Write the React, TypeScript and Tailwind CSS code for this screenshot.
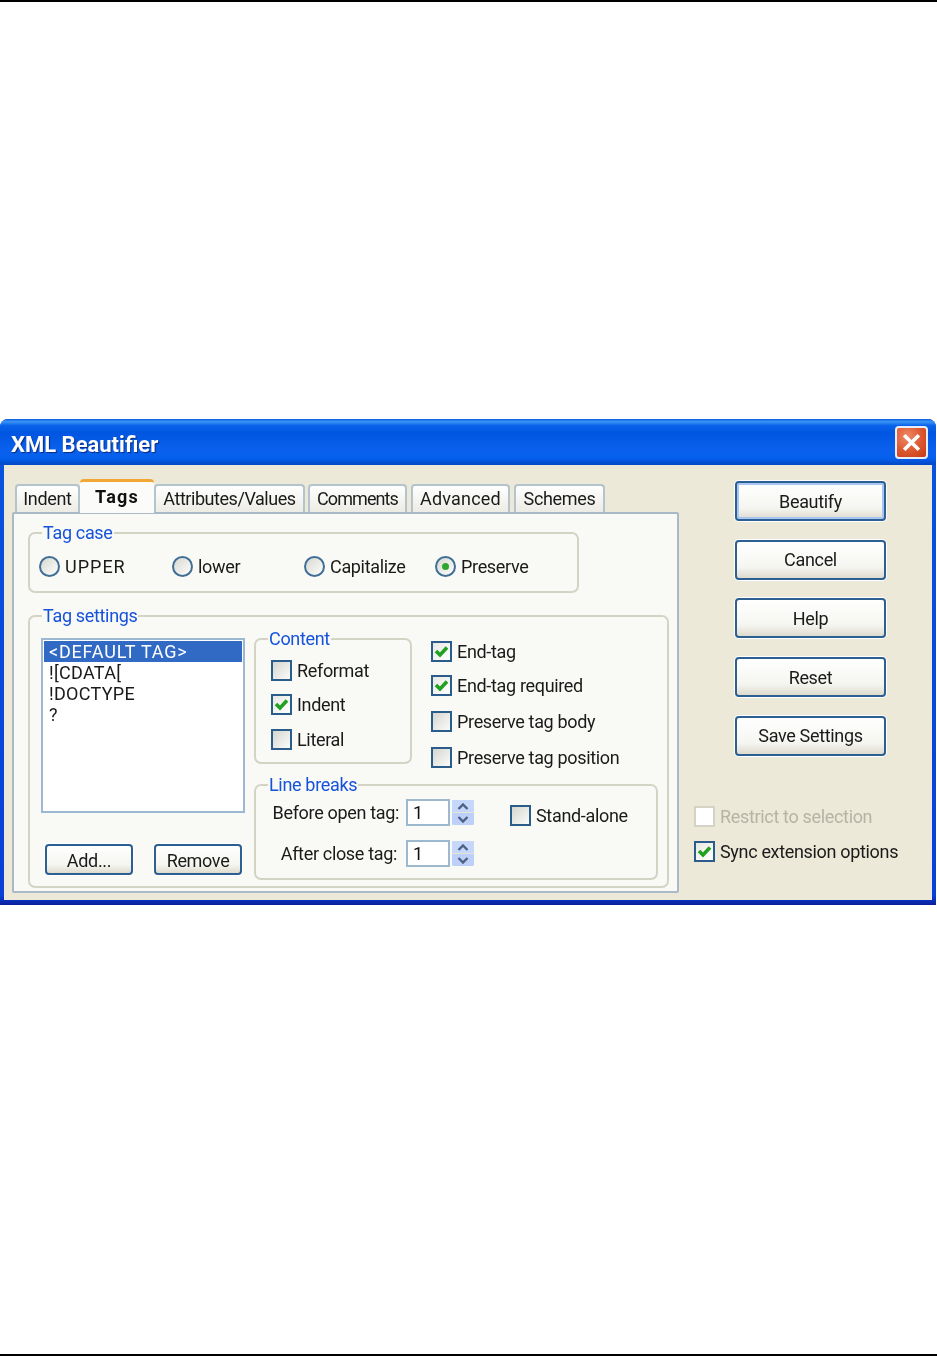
import React from "react";

function Check() {
  return (
    <svg viewBox="0 0 17 17" className="w-full h-full">
      <path d="M3 8 L7 12 L14 4.5" fill="none" stroke="#21a121" strokeWidth="3.6" />
    </svg>
  );
}

function Box({ checked, disabled }: { checked?: boolean; disabled?: boolean }) {
  if (disabled) {
    return <span className="block w-[21px] h-[21px] shrink-0 border-2 border-[#d5d3c5] bg-white" />;
  }
  return (
    <span
      className={
        "block w-[21px] h-[21px] shrink-0 border-2 border-[#2a5d8c] " +
        (checked
          ? "bg-linear-to-br from-[#e8e8e2] to-white"
          : "bg-linear-to-br from-[#d6d6cf] to-[#fbfbfa]")
      }
    >
      {checked && <Check />}
    </span>
  );
}

function CheckRow({
  label,
  checked,
  disabled,
  className,
}: {
  label: string;
  checked?: boolean;
  disabled?: boolean;
  className?: string;
}) {
  return (
    <div className={"flex items-center h-[21px] gap-[5px] " + (className ?? "")}>
      <Box checked={checked} disabled={disabled} />
      <span className={"whitespace-nowrap " + (disabled ? "text-[#b5b3a6]" : "text-[#1a1a1a]")}>{label}</span>
    </div>
  );
}

function Radio({
  label,
  checked,
  className,
  labelClass,
}: {
  label: string;
  checked?: boolean;
  className: string;
  labelClass?: string;
}) {
  return (
    <div className={"flex items-center gap-[5px] " + className}>
      <span className="flex items-center justify-center w-[21px] h-[21px] shrink-0 rounded-full border-2 border-[#3f6f96] bg-linear-to-br from-[#d8d8d2] to-[#fdfdfc]">
        {checked && <span className="block w-[7px] h-[7px] rounded-full bg-[#2fa52f]" />}
      </span>
      <span className={"whitespace-nowrap text-[#1a1a1a] " + (labelClass ?? "")}>{label}</span>
    </div>
  );
}

function Group({ title, className, children }: { title: string; className: string; children: React.ReactNode }) {
  return (
    <div className={"relative border-2 border-[#d4d4c5] rounded-[7px] " + className}>
      <span className="absolute left-[12px] -top-[12px] px-[1px] leading-[22px] bg-[#f9f9f6] text-[#1553dc] whitespace-nowrap">
        {title}
      </span>
      {children}
    </div>
  );
}

function DlgButton({ label, primary, className }: { label: string; primary?: boolean; className: string }) {
  return (
    <button
      className={
        "flex items-center justify-center border-2 border-[#2c5f92] rounded-[4px] text-[#1a1a1a] bg-[linear-gradient(180deg,#ffffff_0%,#f5f5f0_70%,#dedbce_100%)] " +
        (primary
          ? "shadow-[0_0_0_1px_#ffffff,inset_0_0_0_2px_#a9c6f2] "
          : "shadow-[0_0_0_1px_#ffffff] ") +
        className
      }
    >
      {label}
    </button>
  );
}

function Tab({ label, className, selected }: { label: string; className: string; selected?: boolean }) {
  if (selected) {
    return (
      <div
        className={
          "relative z-10 -mb-[1px] h-[34px] flex items-center justify-center pb-[3px] rounded-t-[4px] border-t-[3px] border-[#f2a735] bg-[#fbfbf9] font-bold tracking-[1.2px] text-[#111111] " +
          className
        }
      >
        {label}
      </div>
    );
  }
  return (
    <div
      className={
        "h-[28px] flex items-center justify-center pb-[2px] rounded-t-[4px] border-2 border-b-0 border-[#b4c4cd] bg-linear-to-b from-white to-[#ecebe4] text-[#1a1a1a] " +
        className
      }
    >
      {label}
    </div>
  );
}

function Spin() {
  return (
    <div className="ml-[2px] w-[22px] h-[25px] flex flex-col justify-between bg-[#e6e4d2]">
      <span className="flex items-center justify-center h-[12px] rounded-t-[2px] bg-[#c5d7fb]">
        <svg viewBox="0 0 12 7" className="w-[12px] h-[7px]">
          <path d="M1.5 6 L6 1.5 L10.5 6" fill="none" stroke="#4d6185" strokeWidth="2.4" />
        </svg>
      </span>
      <span className="flex items-center justify-center h-[12px] rounded-b-[2px] bg-[#bcd0fa]">
        <svg viewBox="0 0 12 7" className="w-[12px] h-[7px]">
          <path d="M1.5 1 L6 5.5 L10.5 1" fill="none" stroke="#4d6185" strokeWidth="2.4" />
        </svg>
      </span>
    </div>
  );
}

function SpinInput() {
  return (
    <div className="flex items-center">
      <div className="w-[44px] h-[27px] border-2 border-[#9db9cf] bg-white pl-[5px] flex items-center text-[#111111]">1</div>
      <Spin />
    </div>
  );
}

export default function App() {
  return (
    <div
      className="h-[1357px] bg-white flex flex-col text-[18px] leading-[21px] tracking-[-0.33px]"
      style={{ fontFamily: 'Roboto, "Liberation Sans", Arial, sans-serif' }}
    >
      <div className="h-[2px] bg-black shrink-0" />
      <div className="mt-[417px] w-[936px] h-[486px] shrink-0 flex flex-col rounded-t-[8px] overflow-hidden blur-[0.35px] bg-[linear-gradient(180deg,#0855dd_0%,#0840d8_98%,#0a1f9c_100%)]">
        <div className="h-[46px] shrink-0 flex items-center justify-between pl-[11px] pr-[8px] bg-[linear-gradient(180deg,#0a5ee0_0%,#3c95f5_6%,#0a63ea_14%,#0056e0_30%,#0a60ec_65%,#0560ee_85%,#0348c4_100%)]">
          <span className="pt-[5px] font-bold text-[22px] text-white tracking-[0px] [text-shadow:1px_1px_1px_#0a2a80]">XML Beautifier</span>
          <span className="w-[33px] h-[33px] rounded-[4px] border-2 border-[#e6eefc] bg-[radial-gradient(circle_at_35%_30%,#ef8a68_0%,#de5a32_50%,#c23a12_100%)] flex items-center justify-center">
            <svg viewBox="0 0 20 20" className="w-[21px] h-[21px]">
              <path d="M3 3 L17 17 M17 3 L3 17" stroke="#ffffff" strokeWidth="3.4" />
            </svg>
          </span>
        </div>

        <div className="flex-1 mx-[4px] mb-[5px] bg-[#ece9d8] flex">
          <div className="ml-[8px] pt-[14px] w-[667px] shrink-0">
            <div className="flex items-end h-[33px] pl-[3px]">
              <Tab label="Indent" className="w-[65px]" />
              <Tab label="Tags" selected className="w-[74px]" />
              <Tab label="Attributes/Values" className="w-[151px] tracking-[-0.45px]" />
              <Tab label="Comments" className="w-[99px] ml-[3px] tracking-[-0.9px]" />
              <Tab label="Advanced" className="w-[99px] ml-[4px] tracking-[0.2px]" />
              <Tab label="Schemes" className="w-[91px] ml-[4px]" />
            </div>
            <div className="h-[381px] border-2 border-[#a9bac6] rounded-[2px] bg-[#f9f9f6] pl-[14px] pt-[18px]">
              <Group title="Tag case" className="w-[551px] h-[61px] flex items-center pl-[9px] pt-[8px]">
                <Radio label="UPPER" labelClass="tracking-[1px]" className="w-[133px]" />
                <Radio label="lower" className="w-[132px]" />
                <Radio label="Capitalize" className="w-[131px]" />
                <Radio label="Preserve" checked className="w-[120px]" />
              </Group>

              <Group title="Tag settings" className="mt-[22px] w-[641px] h-[273px] flex pl-[11px] pt-[21px]">
                <div className="w-[204px] shrink-0">
                  <div className="h-[175px] border-2 border-[#9db8d3] bg-white p-[1px]">
                    <div className="h-[21px] bg-[#316ac5] text-white pl-[5px] whitespace-nowrap tracking-[0.8px]">&lt;DEFAULT TAG&gt;</div>
                    <div className="pl-[5px] text-[#1a1a1a] tracking-[0.3px]">![CDATA[</div>
                    <div className="pl-[5px] text-[#1a1a1a] tracking-[0.3px]">!DOCTYPE</div>
                    <div className="pl-[5px] text-[#1a1a1a]">?</div>
                  </div>
                  <div className="mt-[31px] ml-[4px] flex gap-[21px]">
                    <DlgButton label="Add..." className="w-[88px] h-[31px] pt-[1px]" />
                    <DlgButton label="Remove" className="w-[88px] h-[31px] pt-[1px]" />
                  </div>
                </div>

                <div className="ml-[9px] flex flex-col">
                  <div className="flex h-[126px]">
                    <Group title="Content" className="w-[158px] h-[126px] pl-[15px] pt-[20px]">
                      <CheckRow label="Reformat" />
                      <CheckRow label="Indent" checked className="mt-[13px]" />
                      <CheckRow label="Literal" className="mt-[14px]" />
                    </Group>
                    <div className="ml-[19px] pt-[3px]">
                      <CheckRow label="End-tag" checked />
                      <CheckRow label="End-tag required" checked className="mt-[13px]" />
                      <CheckRow label="Preserve tag body" className="mt-[15px]" />
                      <CheckRow label="Preserve tag position" className="mt-[15px]" />
                    </div>
                  </div>
                  <Group title="Line breaks" className="mt-[20px] w-[404px] h-[96px] pt-[13px]">
                    <div className="flex items-center h-[27px]">
                      <span className="w-[143px] text-right text-[#1a1a1a] whitespace-nowrap">Before open tag:</span>
                      <span className="w-[7px]" />
                      <SpinInput />
                      <CheckRow label="Stand-alone" className="ml-[36px] mt-[6px]" />
                    </div>
                    <div className="flex items-center h-[27px] mt-[14px]">
                      <span className="w-[141px] text-right text-[#1a1a1a] whitespace-nowrap">After close tag:</span>
                      <span className="w-[9px]" />
                      <SpinInput />
                    </div>
                  </Group>
                </div>
              </Group>
            </div>
          </div>

          <div className="ml-[15px] pt-[16px] flex flex-col">
            <div className="ml-[41px] flex flex-col gap-[18.7px]">
              <DlgButton label="Beautify" primary className="w-[151px] h-[40px]" />
              <DlgButton label="Cancel" className="w-[151px] h-[40px]" />
              <DlgButton label="Help" className="w-[151px] h-[40px]" />
              <DlgButton label="Reset" className="w-[151px] h-[40px]" />
              <DlgButton label="Save Settings" className="w-[151px] h-[40px]" />
            </div>
            <CheckRow label="Restrict to selection" disabled className="mt-[50px]" />
            <CheckRow label="Sync extension options" checked className="mt-[14px]" />
          </div>
        </div>
      </div>
      <div className="mt-auto mb-[1px] h-[2px] bg-black shrink-0" />
    </div>
  );
}
